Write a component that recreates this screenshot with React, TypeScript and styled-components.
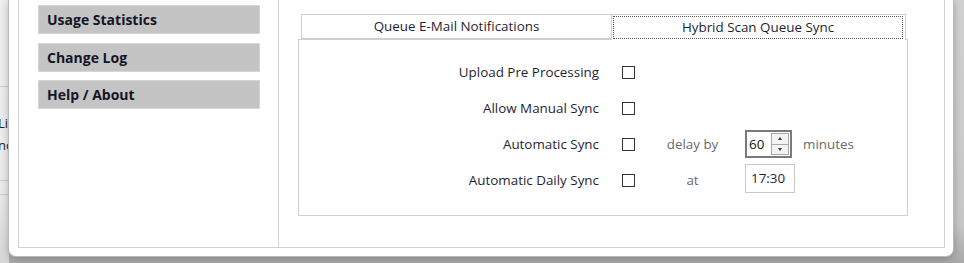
import React from "react";
import styled, { createGlobalStyle } from "styled-components";

const GlobalStyle = createGlobalStyle`
  html, body {
    margin: 0;
    padding: 0;
    background: #c4c4c4;
    overflow: hidden;
  }
  body {
    font-family: "Open Sans", "Noto Sans", "Liberation Sans", sans-serif;
  }
`;

const Desktop = styled.div`
  display: flex;
  width: 964px;
  height: 263px;
  background: linear-gradient(to bottom, #d2d2d2 0%, #c8c8c8 85%, #a9a9a9 100%);
  overflow: hidden;
`;

const BehindWindow = styled.div`
  width: 9px;
  height: 263px;
  flex: none;
  overflow: hidden;
  background: linear-gradient(to bottom, #efefef 0%, #ececec 70%, #d6d6d6 100%);
  display: flex;
  flex-direction: column;
`;

const BehindPane = styled.div<{ $h: number }>`
  height: ${(p) => p.$h}px;
  flex: none;
  border-bottom: 1px solid #c9c9c9;
  font-size: 13px;
  color: #222;
  white-space: nowrap;
  margin-left: -2px;
`;

const BehindText = styled.div`
  line-height: 22px;
`;

const Dialog = styled.div`
  width: 944px;
  height: 256px;
  flex: none;
  background: #fff;
  border-radius: 0 0 7px 7px;
  box-shadow: 0 0 0 1px #b9b9b9, 0 2px 8px rgba(0, 0, 0, 0.3);
  padding: 0 8px 8px 9px;
  box-sizing: border-box;
  position: relative;
  z-index: 1;
`;

const Frame = styled.div`
  height: 248px;
  border: 1px solid #d2d2d2;
  border-top: none;
  box-sizing: border-box;
  display: flex;
`;

const Sidebar = styled.nav`
  width: 260px;
  flex: none;
  border-right: 1px solid #d2d2d2;
  padding: 5px 0 0 19px;
  box-sizing: border-box;
  display: flex;
  flex-direction: column;
  gap: 8.5px;
`;

const NavButton = styled.div`
  width: 222px;
  height: 29px;
  box-sizing: border-box;
  background: #c4c4c4;
  border: 1px solid #d6d6d6;
  padding-left: 8px;
  display: flex;
  align-items: center;
  font-weight: 700;
  font-size: 14px;
  color: #141428;
`;

const Content = styled.div`
  flex: 1;
  padding: 14px 0 0 19px;
`;

const TabStrip = styled.div`
  display: flex;
  padding-left: 3px;
  height: 25px;
`;

const Tab = styled.div<{ $w: number; $active?: boolean }>`
  width: ${(p) => p.$w}px;
  box-sizing: border-box;
  border: 1px solid #cfcfcf;
  border-bottom: ${(p) => (p.$active ? "none" : "1px solid #cfcfcf")};
  border-left: ${(p) => (p.$active ? "none" : "1px solid #cfcfcf")};
  background: #fff;
  font-size: 13.4px;
  color: #1f1f33;
  display: flex;
  align-items: stretch;
  padding: ${(p) => (p.$active ? "1px 2px 1px 1px" : "0")};
  position: relative;
  z-index: ${(p) => (p.$active ? 2 : 1)};
  height: ${(p) => (p.$active ? 26 : 25)}px;
`;

const TabLabel = styled.div<{ $focus?: boolean }>`
  flex: 1;
  display: flex;
  align-items: center;
  justify-content: center;
  border: ${(p) => (p.$focus ? "1px dotted #555" : "1px solid transparent")};
  padding-bottom: 1px;
`;

const Panel = styled.div`
  width: 610px;
  height: 177px;
  box-sizing: border-box;
  border: 1px solid #cfcfcf;
  padding-top: 14px;
`;

const FormGrid = styled.div`
  display: grid;
  grid-template-columns: 323px 13px 110px 50px auto;
  grid-auto-rows: 36px;
  align-items: center;
  font-size: 13.4px;
  color: #1f1f33;
`;

const Label = styled.div`
  text-align: right;
  padding-right: 23px;
  white-space: nowrap;
`;

const Checkbox = styled.div`
  width: 13px;
  height: 13px;
  box-sizing: border-box;
  border: 1px solid #333;
  background: #fff;
`;

const Hint = styled.div<{ $align?: string }>`
  color: #6a6a6a;
  text-align: ${(p) => p.$align || "center"};
  padding-left: ${(p) => (p.$align === "left" ? 8 : 5)}px;
  white-space: nowrap;
`;

const Spinner = styled.div`
  width: 47px;
  height: 28px;
  box-sizing: border-box;
  border: 2px solid #7a7a7a;
  display: flex;
  align-items: center;
  background: #fff;
  color: #111;
`;

const SpinValue = styled.div`
  flex: 1;
  padding-left: 2px;
`;

const SpinButtons = styled.div`
  width: 18px;
  height: 22px;
  margin-right: 1px;
  display: flex;
  flex-direction: column;
  border: 1px solid #a8a8a8;
  box-sizing: border-box;
`;

const SpinHalf = styled.div<{ $up?: boolean }>`
  flex: 1;
  background: #f3f3f3;
  border-bottom: ${(p) => (p.$up ? "1px solid #a8a8a8" : "none")};
  display: flex;
  align-items: center;
  justify-content: center;
  &::after {
    content: "";
    width: 0;
    height: 0;
    border-left: 2px solid transparent;
    border-right: 2px solid transparent;
    ${(p) =>
      p.$up ? "border-bottom: 3px solid #333;" : "border-top: 3px solid #333;"}
  }
`;

const TimeBox = styled.div`
  width: 50px;
  height: 29px;
  box-sizing: border-box;
  border: 1px solid #c8c8c8;
  display: flex;
  align-items: center;
  padding-left: 5px;
  color: #1f1f33;
  margin-top: -4px;
`;

const rows = [
  { label: "Upload Pre Processing" },
  { label: "Allow Manual Sync" },
  { label: "Automatic Sync", extra: "delay" },
  { label: "Automatic Daily Sync", extra: "at" },
];

export default function App() {
  return (
    <>
      <GlobalStyle />
      <Desktop>
        <BehindWindow>
          <BehindPane $h={86} />
          <BehindPane $h={93}>
            <BehindText style={{ marginTop: 25 }}>Licence</BehindText>
            <BehindText>none</BehindText>
          </BehindPane>
          <BehindPane $h={13} />
        </BehindWindow>
        <Dialog>
          <Frame>
            <Sidebar>
              <NavButton>Usage Statistics</NavButton>
              <NavButton>Change Log</NavButton>
              <NavButton>Help / About</NavButton>
            </Sidebar>
            <Content>
              <TabStrip>
                <Tab $w={311}>
                  <TabLabel>Queue E-Mail Notifications</TabLabel>
                </Tab>
                <Tab $w={294} $active>
                  <TabLabel $focus>Hybrid Scan Queue Sync</TabLabel>
                </Tab>
              </TabStrip>
              <Panel>
                <FormGrid>
                  {rows.map((r) => (
                    <React.Fragment key={r.label}>
                      <Label>{r.label}</Label>
                      <Checkbox />
                      {r.extra === "delay" ? (
                        <>
                          <Hint>delay by</Hint>
                          <Spinner>
                            <SpinValue>60</SpinValue>
                            <SpinButtons>
                              <SpinHalf $up />
                              <SpinHalf />
                            </SpinButtons>
                          </Spinner>
                          <Hint $align="left">minutes</Hint>
                        </>
                      ) : r.extra === "at" ? (
                        <>
                          <Hint>at</Hint>
                          <TimeBox>17:30</TimeBox>
                          <div />
                        </>
                      ) : (
                        <>
                          <div />
                          <div />
                          <div />
                        </>
                      )}
                    </React.Fragment>
                  ))}
                </FormGrid>
              </Panel>
            </Content>
          </Frame>
        </Dialog>
      </Desktop>
    </>
  );
}
